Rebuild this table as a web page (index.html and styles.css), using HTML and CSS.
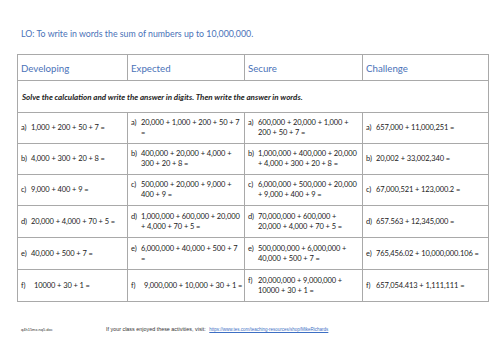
FILE: index.html
```html
<!DOCTYPE html>
<html lang="en">
<head>
<meta charset="utf-8">
<title>LO: To write in words the sum of numbers up to 10,000,000.</title>
<link rel="stylesheet" href="styles.css">
</head>
<body>
<main class="page">
  <p class="lo">LO: To write in words the sum of numbers up to 10,000,000.</p>
  <table class="grid">
    <colgroup>
      <col class="c1"><col class="c2"><col class="c3"><col class="c4">
    </colgroup>
    <thead>
      <tr class="head">
        <th>Developing</th>
        <th>Expected</th>
        <th>Secure</th>
        <th>Challenge</th>
      </tr>
    </thead>
    <tbody>
      <tr class="instr">
        <td colspan="4">Solve the calculation and write the answer in digits. Then write the answer in words.</td>
      </tr>
      <tr class="q r31">
        <td><div class="item"><span class="lbl">a)</span><span>1,000 + 200 + 50 + 7 =</span></div></td>
        <td><div class="item"><span class="lbl">a)</span><span>20,000 + 1,000 + 200 + 50 + 7 =</span></div></td>
        <td><div class="item"><span class="lbl">a)</span><span>600,000 + 20,000 + 1,000 + 200 + 50 + 7 =</span></div></td>
        <td><div class="item"><span class="lbl">a)</span><span>657,000 + 11,000,251 =</span></div></td>
      </tr>
      <tr class="q r31">
        <td><div class="item"><span class="lbl">b)</span><span>4,000 + 300 + 20 + 8 =</span></div></td>
        <td><div class="item"><span class="lbl">b)</span><span>400,000 + 20,000 + 4,000 + 300 + 20 + 8 =</span></div></td>
        <td><div class="item"><span class="lbl">b)</span><span>1,000,000 + 400,000 + 20,000 + 4,000 + 300 + 20 + 8 =</span></div></td>
        <td><div class="item"><span class="lbl">b)</span><span>20,002 + 33,002,340 =</span></div></td>
      </tr>
      <tr class="q r31">
        <td><div class="item"><span class="lbl">c)</span><span>9,000 + 400 + 9 =</span></div></td>
        <td><div class="item"><span class="lbl">c)</span><span>500,000 + 20,000 + 9,000 + 400 + 9 =</span></div></td>
        <td><div class="item"><span class="lbl">c)</span><span>6,000,000 + 500,000 + 20,000 + 9,000 + 400 + 9 =</span></div></td>
        <td><div class="item"><span class="lbl">c)</span><span>67,000,521 + 123,000.2 =</span></div></td>
      </tr>
      <tr class="q r32">
        <td><div class="item"><span class="lbl">d)</span><span>20,000 + 4,000 + 70 + 5 =</span></div></td>
        <td><div class="item"><span class="lbl">d)</span><span>1,000,000 + 600,000 + 20,000 + 4,000 + 70 + 5 =</span></div></td>
        <td><div class="item"><span class="lbl">d)</span><span>70,000,000 + 600,000 +<br>20,000 + 4,000 + 70 + 5 =</span></div></td>
        <td><div class="item"><span class="lbl">d)</span><span>657.563 + 12,345,000 =</span></div></td>
      </tr>
      <tr class="q r32">
        <td><div class="item"><span class="lbl">e)</span><span>40,000 + 500 + 7 =</span></div></td>
        <td><div class="item"><span class="lbl">e)</span><span>6,000,000 + 40,000 + 500 + 7 =</span></div></td>
        <td><div class="item"><span class="lbl">e)</span><span>500,000,000 + 6,000,000 + 40,000 + 500 + 7 =</span></div></td>
        <td><div class="item"><span class="lbl">e)</span><span>765,456.02 + 10,000,000.106 =</span></div></td>
      </tr>
      <tr class="q r32">
        <td><div class="item"><span class="lbl wide">f)</span><span>10000 + 30 + 1 =</span></div></td>
        <td><div class="item"><span class="lbl wide">f)</span><span>9,000,000 + 10,000 + 30 + 1 =</span></div></td>
        <td><div class="item"><span class="lbl">f)</span><span>20,000,000 + 9,000,000 + 10000 + 30 + 1 =</span></div></td>
        <td><div class="item"><span class="lbl">f)</span><span>657,054.413 + 1,111,111 =</span></div></td>
      </tr>
    </tbody>
  </table>
  <footer class="foot">
    <span class="file">q4h15mx.nq5.doc</span>
    <span class="promo">If your class enjoyed these activities, visit: <a href="#">https://www.tes.com/teaching-resources/shop/MikeRichards</a></span>
  </footer>
</main>
</body>
</html>
```
FILE: styles.css
```css
html, body {
  margin: 0;
  padding: 0;
  background: #ffffff;
}

.page {
  width: 500px;
  height: 354px;
  box-sizing: border-box;
  padding: 28px 0 0 17px;
  font-family: Lato, "Open Sans", sans-serif;
  color: #1a1a1a;
}

.lo {
  margin: 0 0 14px 4px;
  font-size: 8.8px;
  line-height: 12px;
  color: #4a72b8;
}

.grid {
  border-collapse: collapse;
  table-layout: fixed;
  width: 471px;
}

.c1 { width: 110px; }
.c2 { width: 117px; }
.c3 { width: 118px; }
.c4 { width: 126px; }

.grid th,
.grid td {
  border: 1px solid #a9a9a9;
  padding: 0 1px 0 3px;
  vertical-align: middle;
  text-align: left;
}

.head th {
  height: 25px;
  font-weight: normal;
  font-size: 9.7px;
  color: #4a72b8;
}

.instr td {
  height: 31px;
  font-size: 8px;
  font-style: italic;
  font-weight: bold;
  color: #222;
  padding-left: 4px;
}

.q td {
  font-size: 7.5px;
  line-height: 10px;
  letter-spacing: -0.1px;
}

.r31 td { height: 30px; }
.r32 td { height: 31px; }

.item {
  display: flex;
}

.lbl {
  flex: 0 0 10px;
}

.lbl.wide {
  flex-basis: 13px;
}

.foot {
  display: flex;
  align-items: baseline;
  margin-top: 24px;
  padding-left: 4px;
  font-family: "Liberation Sans", Arial, sans-serif;
  color: #333;
}

.file {
  width: 85px;
  font-size: 4px;
}

.promo {
  font-size: 5.4px;
}

.promo a {
  color: #3d6fc4;
  text-decoration: underline;
  font-size: 4.5px;
  margin-left: 2px;
}
```
